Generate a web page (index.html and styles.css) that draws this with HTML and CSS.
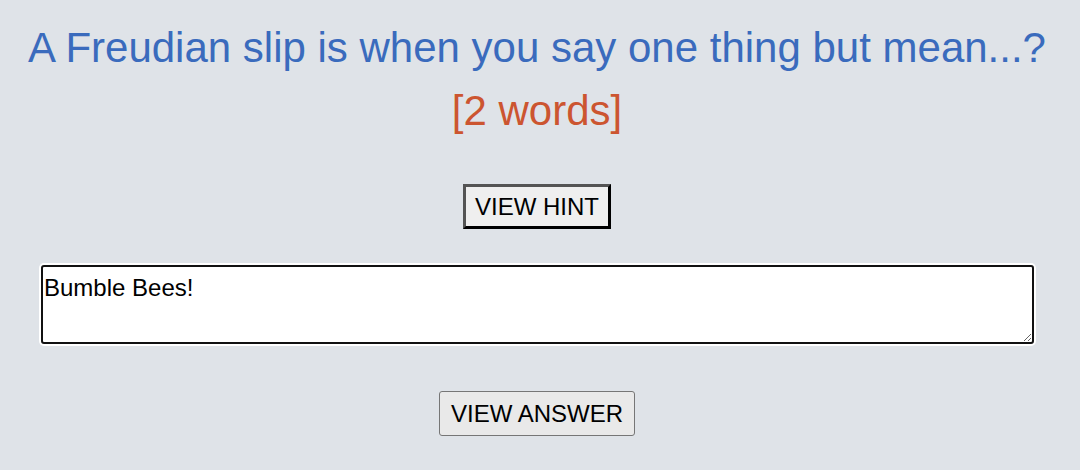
FILE: index.html
```html
<!DOCTYPE html>
<html>
<head>
<meta charset="utf-8">
<link rel="stylesheet" href="styles.css">
</head>
<body>
<main class="card">
  <div class="question">A Freudian slip is when you say one thing but mean...?</div>
  <div class="count">[2 words]</div>
  <button class="hint-btn">VIEW HINT</button>
  <textarea class="answer-box">Bumble Bees!</textarea>
  <button class="answer-btn">VIEW ANSWER</button>
</main>
</body>
</html>
```
FILE: styles.css
```css
html, body {
  margin: 0;
  padding: 0;
  background: #dfe3e8;
}
.card {
  width: 1074px;
  padding-top: 17px;
  display: flex;
  flex-direction: column;
  align-items: center;
  font-family: "Liberation Sans", Arial, sans-serif;
}
.question {
  font-size: 42px;
  line-height: 61px;
  color: #3a6bbd;
  white-space: nowrap;
}
.count {
  margin-top: 2px;
  font-size: 42px;
  line-height: 61px;
  color: #cc5530;
}
.hint-btn {
  margin-top: 43px;
  font-family: "Liberation Sans", Arial, sans-serif;
  font-size: 24px;
  line-height: 27px;
  color: #000;
  background: #efefef;
  border: 3px outset #000;
  padding: 6px 9px;
  height: 45px;
  box-sizing: border-box;
  border-radius: 0;
}
.answer-box {
  margin-top: 36px;
  width: 993px;
  height: 79px;
  box-sizing: border-box;
  border: 2px solid #111;
  border-radius: 3px;
  box-shadow: 0 0 0 2px #fff;
  padding: 7px 1px 1px 1px;
  font-family: "Liberation Sans", Arial, sans-serif;
  font-size: 24px;
  line-height: 27px;
  color: #000;
  background: #fff;
  outline: none;
  align-self: flex-start;
  margin-left: 41px;
}
.answer-btn {
  margin-top: 47px;
  font-family: "Liberation Sans", Arial, sans-serif;
  font-size: 24px;
  line-height: 27px;
  color: #000;
  background: #e9e9e9;
  border: 1px solid #767676;
  border-radius: 3px;
  padding: 0 11px;
  height: 45px;
  box-sizing: border-box;
}
```
